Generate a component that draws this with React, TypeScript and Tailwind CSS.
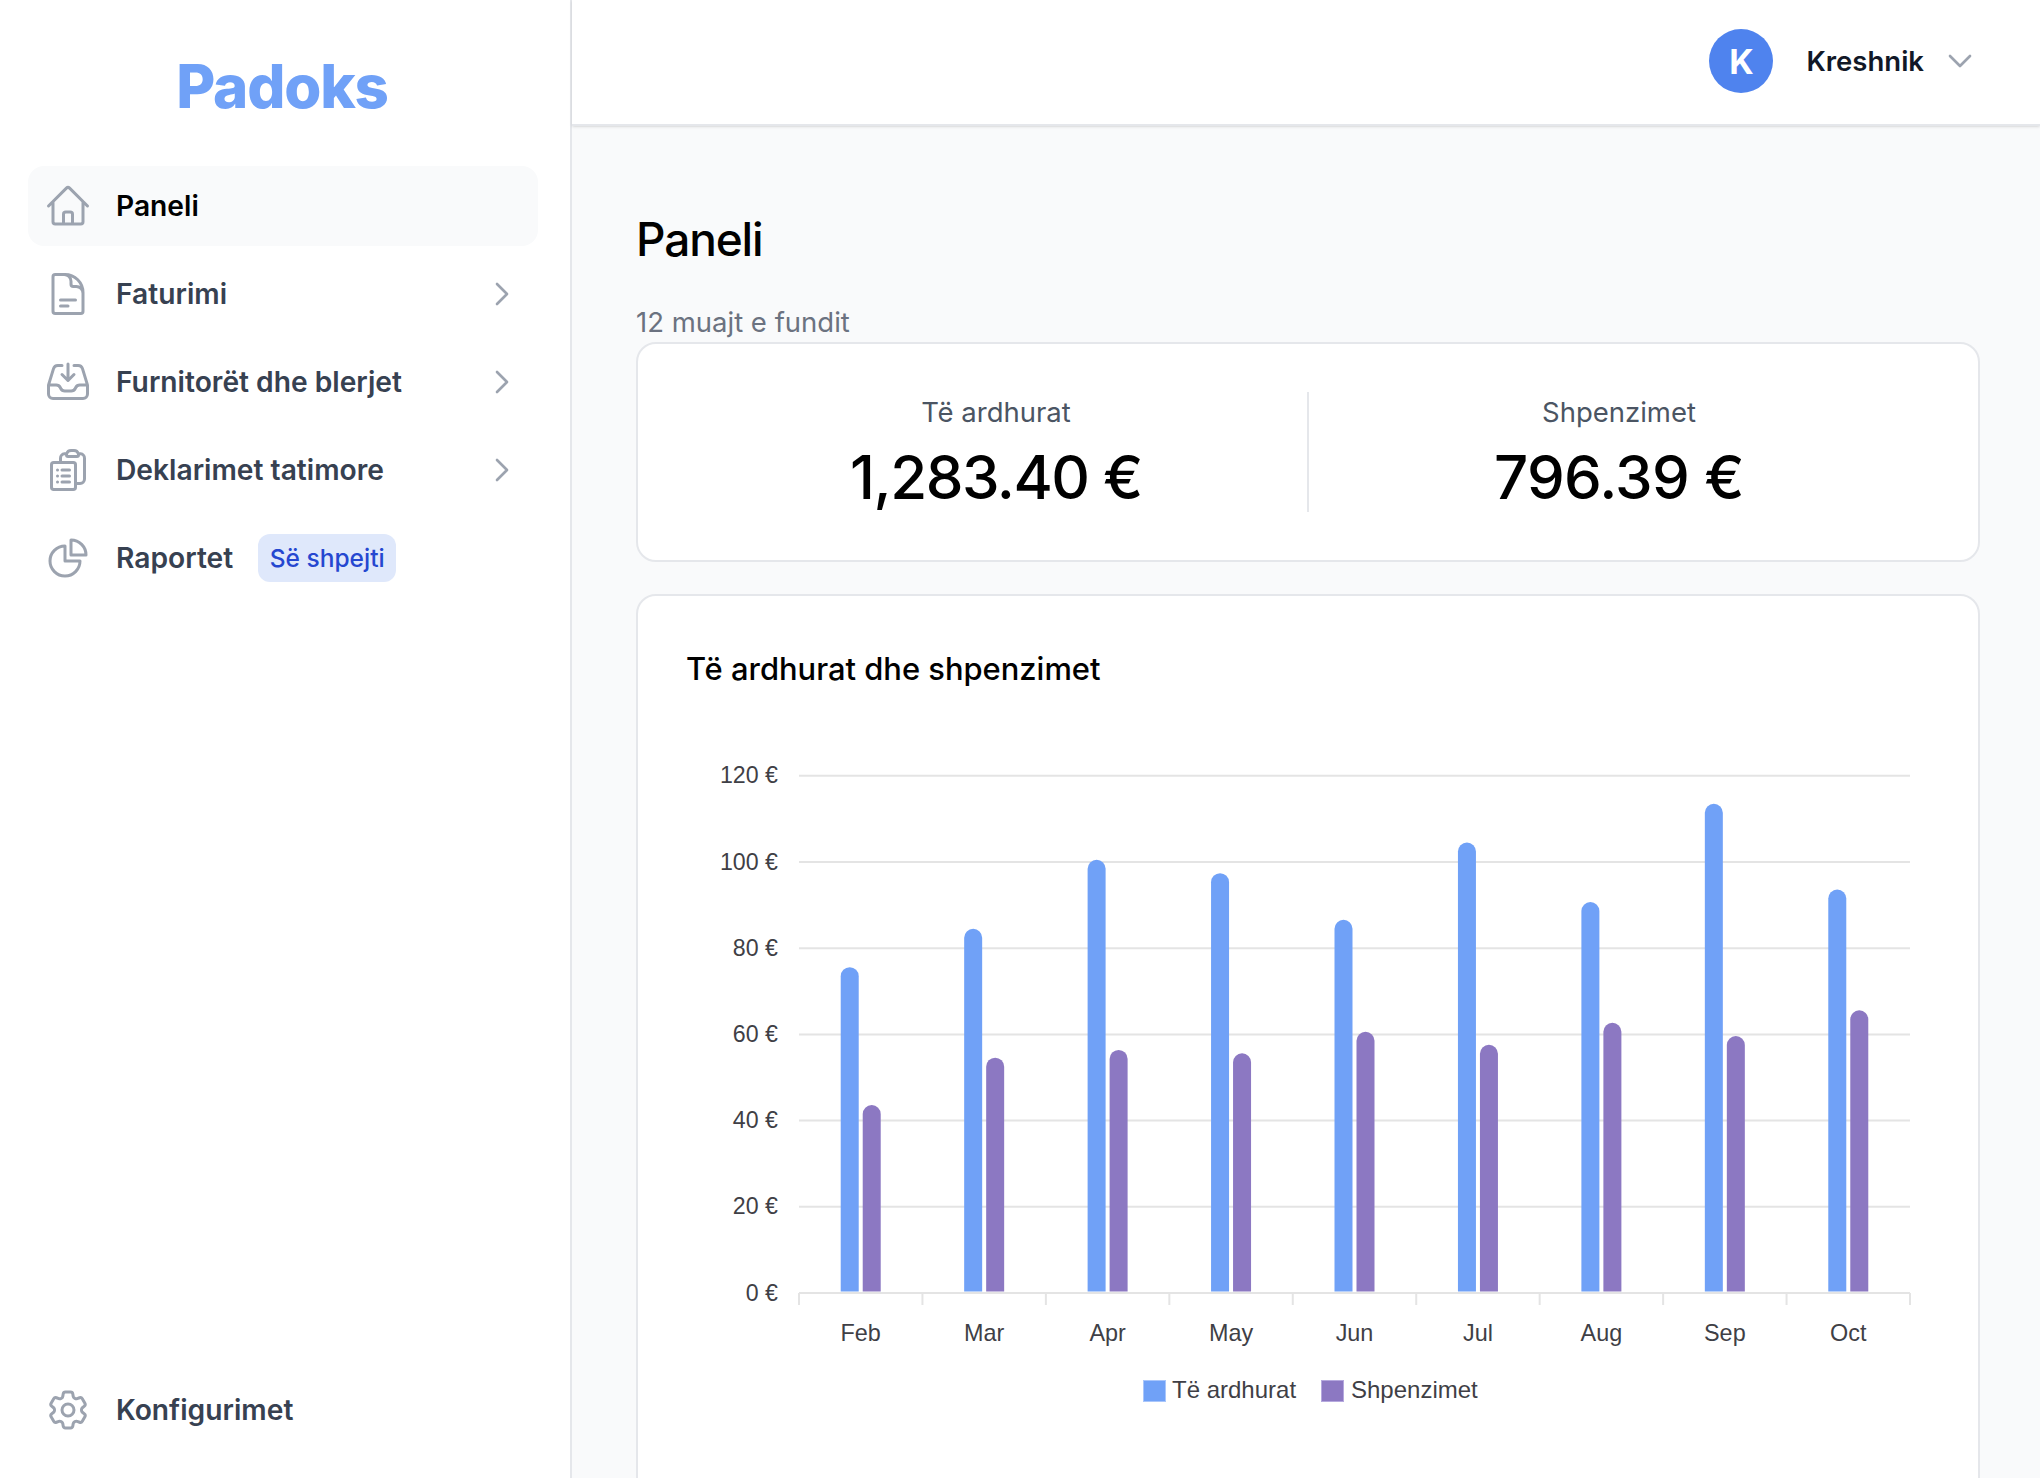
import type { ReactNode } from "react";
import {
  HiOutlineChartPie,
  HiOutlineChevronDown,
  HiOutlineChevronRight,
  HiOutlineClipboardDocumentList,
  HiOutlineCog6Tooth,
  HiOutlineDocumentText,
  HiOutlineHome,
  HiOutlineInboxArrowDown,
} from "react-icons/hi2";

const sans = "font-['Inter',sans-serif]";

function NavItem({
  icon,
  label,
  active,
  chevron,
  children,
}: {
  icon: ReactNode;
  label: string;
  active?: boolean;
  chevron?: boolean;
  children?: ReactNode;
}) {
  return (
    <div className={`flex h-20 items-center rounded-2xl pl-4 pr-5 ${active ? "bg-[#f9fafb] text-black" : "text-[#374151]"}`}>
      <span className="text-[48px] text-[#9ca3af]">{icon}</span>
      <span className="ml-6 mt-[1px] text-[28.2px] font-semibold">{label}</span>
      {children}
      {chevron && <HiOutlineChevronRight strokeWidth={2} className="ml-auto text-[32px] text-[#9ca3af]" />}
    </div>
  );
}

const months = [
  { name: "Feb", income: 75.6, costs: 43.6 },
  { name: "Mar", income: 84.5, costs: 54.6 },
  { name: "Apr", income: 100.5, costs: 56.4 },
  { name: "May", income: 97.4, costs: 55.6 },
  { name: "Jun", income: 86.6, costs: 60.6 },
  { name: "Jul", income: 104.5, costs: 57.6 },
  { name: "Aug", income: 90.7, costs: 62.7 },
  { name: "Sep", income: 113.5, costs: 59.6 },
  { name: "Oct", income: 93.6, costs: 65.6 },
];

const BLUE = "#70a1f7";
const PURPLE = "#8c78c2";
const LEFT = 161;
const RIGHT = 1272;
const BASE = 572;
const STEP = 86.2;
const COL = (RIGHT - LEFT) / 9;

function bar(x: number, value: number) {
  const top = BASE - (value / 20) * STEP;
  return `M${x} ${BASE - 1.5}V${top + 9}A9 9 0 0 1 ${x + 18} ${top + 9}V${BASE - 1.5}Z`;
}

function Chart() {
  return (
    <svg width="1339" height="700" viewBox="0 0 1339 700" className="block" fontFamily="'Liberation Sans', sans-serif" fontSize="23.2" fill="#3f3f46">
      {[0, 1, 2, 3, 4, 5, 6].map((i) => (
        <g key={i}>
          <line x1={LEFT} x2={RIGHT} y1={BASE - i * STEP} y2={BASE - i * STEP} stroke="#e4e4e4" strokeWidth="2" />
          <text x="140" y={BASE - i * STEP + 7.5} textAnchor="end">
            {i * 20} €
          </text>
        </g>
      ))}
      {[0, 1, 2, 3, 4, 5, 6, 7, 8, 9].map((i) => (
        <line key={i} x1={LEFT + i * COL} x2={LEFT + i * COL} y1={BASE} y2={BASE + 12} stroke="#e4e4e4" strokeWidth="2" />
      ))}
      {months.map((m, i) => {
        const mid = LEFT + (i + 0.5) * COL;
        return (
          <g key={m.name}>
            <path d={bar(mid - 20, m.income)} fill={BLUE} />
            <path d={bar(mid + 2, m.costs)} fill={PURPLE} />
            <text x={mid} y="620" textAnchor="middle" fontSize="23.4">
              {m.name}
            </text>
          </g>
        );
      })}
      <rect x="505.5" y="659.5" width="22" height="21" fill={BLUE} stroke="#a9c6fb" />
      <text x="534" y="677" fontSize="24">Të ardhurat</text>
      <rect x="683.5" y="659.5" width="22" height="21" fill={PURPLE} stroke="#b5a8de" />
      <text x="713" y="677" fontSize="24">Shpenzimet</text>
    </svg>
  );
}

export default function App() {
  return (
    <div className={`flex h-screen overflow-hidden bg-[#f9fafb] ${sans}`}>
      <aside className="flex w-[572px] shrink-0 flex-col border-r-2 border-[#e5e7eb] bg-white pb-[28px] pl-[28px] pr-[32px]">
        <div className="flex h-[166px] items-center justify-center pr-[2px] pt-[6px] text-[60px] font-extrabold tracking-[-0.02em] text-[#70a1f7]">Padoks</div>
        <nav className="flex flex-col gap-2">
          <NavItem icon={<HiOutlineHome />} label="Paneli" active />
          <NavItem icon={<HiOutlineDocumentText />} label="Faturimi" chevron />
          <NavItem icon={<HiOutlineInboxArrowDown />} label="Furnitorët dhe blerjet" chevron />
          <NavItem icon={<HiOutlineClipboardDocumentList />} label="Deklarimet tatimore" chevron />
          <NavItem icon={<HiOutlineChartPie />} label="Raportet">
            <span className="ml-[25px] flex h-12 w-[138px] items-center justify-center rounded-xl bg-[#dfe8fb] text-[24.5px] font-medium text-[#2547d0]">Së shpejti</span>
          </NavItem>
        </nav>
        <div className="mt-auto">
          <NavItem icon={<HiOutlineCog6Tooth />} label="Konfigurimet" />
        </div>
      </aside>

      <div className="flex min-w-0 flex-1 flex-col">
        <header className="flex h-[126px] shrink-0 items-center justify-end border-b-2 border-[#e5e7eb] bg-white pb-[2px] pr-[64px] shadow-sm">
          <div className="flex h-16 w-16 items-center justify-center rounded-full bg-[#4f83ee] text-[34px] font-bold text-white">K</div>
          <span className="ml-[33px] mt-[2px] text-[27.5px] font-semibold text-[#111827]">Kreshnik</span>
          <HiOutlineChevronDown strokeWidth={2} className="ml-[20px] text-[32px] text-[#9ca3af]" />
        </header>

        <main className="flex-1 pl-16 pr-[60px] pt-[84px]">
          <h1 className="text-[46px] font-medium leading-[58px] tracking-tight text-black">Paneli</h1>
          <p className="mt-9 text-[27.5px] leading-9 text-[#6b7280]">12 muajt e fundit</p>

          <section className="mt-[2px] grid grid-cols-2 rounded-[20px] border-2 border-[#e5e7eb] bg-white py-12 pl-[47px] pr-[49px]">
            <div className="flex h-[120px] flex-col items-center">
              <span className="mt-[2px] text-[27.5px] leading-9 text-[#4b5563]">Të ardhurat</span>
              <span className="mt-[11px] text-[60px] font-medium leading-[72px] tracking-tight text-black">1,283.40 €</span>
            </div>
            <div className="flex h-[120px] flex-col items-center border-l-2 border-[#e5e7eb]">
              <span className="mt-[2px] text-[27.5px] leading-9 text-[#4b5563]">Shpenzimet</span>
              <span className="mt-[11px] text-[60px] font-medium leading-[72px] tracking-[-0.012em] text-black">796.39 €</span>
            </div>
          </section>

          <section className="mt-8 rounded-[20px] border-2 border-[#e5e7eb] bg-white pb-20 pt-[53px]">
            <h2 className="pl-[48px] text-[30.9px] font-medium leading-10 text-black">Të ardhurat dhe shpenzimet</h2>
            <div className="mt-8">
              <Chart />
            </div>
          </section>
        </main>
      </div>
    </div>
  );
}
